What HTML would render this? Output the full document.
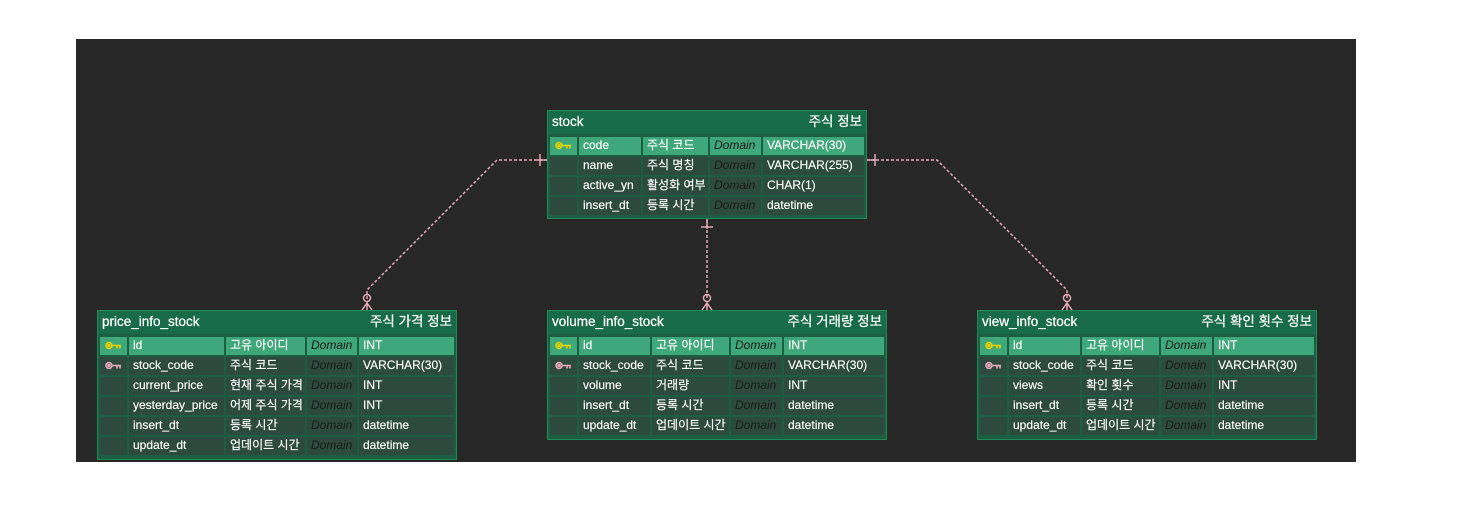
<!DOCTYPE html>
<html><head><meta charset="utf-8"><style>
body{margin:0;width:1470px;height:522px;background:#fff;position:relative;overflow:hidden;font-family:"Liberation Sans","Noto Sans CJK KR",sans-serif}
.canvas{position:absolute;left:76px;top:39px;width:1280px;height:423px;background:#272727}
.t{position:absolute;background:#1c5e41;border:1px solid #1f8a56;box-sizing:border-box}
.hd{position:absolute;left:0;right:0;top:0;height:23px;background:#186b48;color:#fff;font-size:13.5px;line-height:21px;-webkit-text-stroke:0.25px #fff}
.hd .n{position:absolute;left:4px}
.hd .c{position:absolute;right:4px}
.c0{position:absolute;height:18px;background:#2d4a3e;color:#fff;font-size:12px;line-height:17px;padding-left:4px;box-sizing:border-box;white-space:nowrap;overflow:hidden;-webkit-text-stroke:0.15px #fff}
.pk .c0{background:#3fa87a}
.d{font-style:italic;color:#1a1a1a;-webkit-text-stroke:0}
.r{position:absolute;left:0;right:0;height:18px}
.key{position:absolute;left:5px;top:4px}
</style></head><body>
<div class="canvas"></div>
<svg width="1470" height="522" style="position:absolute;left:0;top:0" fill="none" stroke="#e6a9b8" stroke-width="1.5">
<path d="M547 160H497L367 290V300" stroke-dasharray="3 2"/>
<path d="M866 160H937L1067 290V300" stroke-dasharray="3 2"/>
<path d="M707 220V300" stroke-dasharray="3 2"/>
<path d="M540 154v12M875 154v12M701 227h12M707 219v10M547 160h-10M866 160h10"/>
<circle cx="367" cy="298" r="3.5"/><circle cx="707" cy="298" r="3.5"/><circle cx="1067" cy="298" r="3.5"/>
<path d="M367 302v8M362 310l5-7 5 7M707 302v8M702 310l5-7 5 7M1067 302v8M1062 310l5-7 5 7"/>
</svg>

<!-- stock -->
<div class="t" style="left:547px;top:110px;width:320px;height:109px">
<div class="hd"><span class="n">stock</span><span class="c">주식 정보</span></div>
<div class="r pk" style="top:26px"><div class="c0" style="left:2px;width:27px"><svg class="key" width="17" height="9" viewBox="0 0 17 9" fill="none" stroke="#e4d100" stroke-width="1.6"><circle cx="4" cy="4.5" r="3"/><circle cx="4" cy="4.5" r="1"/><path d="M7 4.5h9M12 4.5v3M15 4.5v3"/></svg></div><div class="c0" style="left:31px;width:62px">code</div><div class="c0" style="left:95px;width:65px">주식 코드</div><div class="c0 d" style="left:162px;width:51px">Domain</div><div class="c0" style="left:215px;width:101px">VARCHAR(30)</div></div>
<div class="r" style="top:46px"><div class="c0" style="left:2px;width:27px"></div><div class="c0" style="left:31px;width:62px">name</div><div class="c0" style="left:95px;width:65px">주식 명칭</div><div class="c0 d" style="left:162px;width:51px">Domain</div><div class="c0" style="left:215px;width:101px">VARCHAR(255)</div></div>
<div class="r" style="top:66px"><div class="c0" style="left:2px;width:27px"></div><div class="c0" style="left:31px;width:62px">active_yn</div><div class="c0" style="left:95px;width:65px">활성화 여부</div><div class="c0 d" style="left:162px;width:51px">Domain</div><div class="c0" style="left:215px;width:101px">CHAR(1)</div></div>
<div class="r" style="top:86px"><div class="c0" style="left:2px;width:27px"></div><div class="c0" style="left:31px;width:62px">insert_dt</div><div class="c0" style="left:95px;width:65px">등록 시간</div><div class="c0 d" style="left:162px;width:51px">Domain</div><div class="c0" style="left:215px;width:101px">datetime</div></div>
</div>

<!-- price -->
<div class="t" style="left:97px;top:310px;width:360px;height:150px">
<div class="hd"><span class="n">price_info_stock</span><span class="c">주식 가격 정보</span></div>
<div class="r pk" style="top:26px"><div class="c0" style="left:2px;width:27px"><svg class="key" width="17" height="9" viewBox="0 0 17 9" fill="none" stroke="#e4d100" stroke-width="1.6"><circle cx="4" cy="4.5" r="3"/><circle cx="4" cy="4.5" r="1"/><path d="M7 4.5h9M12 4.5v3M15 4.5v3"/></svg></div><div class="c0" style="left:31px;width:95px">id</div><div class="c0" style="left:128px;width:79px">고유 아이디</div><div class="c0 d" style="left:209px;width:50px">Domain</div><div class="c0" style="left:261px;width:95px">INT</div></div>
<div class="r" style="top:46px"><div class="c0" style="left:2px;width:27px"><svg class="key" width="17" height="9" viewBox="0 0 17 9" fill="none" stroke="#e6a9b8" stroke-width="1.6"><circle cx="4" cy="4.5" r="3"/><circle cx="4" cy="4.5" r="1"/><path d="M7 4.5h9M12 4.5v3M15 4.5v3"/></svg></div><div class="c0" style="left:31px;width:95px">stock_code</div><div class="c0" style="left:128px;width:79px">주식 코드</div><div class="c0 d" style="left:209px;width:50px">Domain</div><div class="c0" style="left:261px;width:95px">VARCHAR(30)</div></div>
<div class="r" style="top:66px"><div class="c0" style="left:2px;width:27px"></div><div class="c0" style="left:31px;width:95px">current_price</div><div class="c0" style="left:128px;width:79px">현재 주식 가격</div><div class="c0 d" style="left:209px;width:50px">Domain</div><div class="c0" style="left:261px;width:95px">INT</div></div>
<div class="r" style="top:86px"><div class="c0" style="left:2px;width:27px"></div><div class="c0" style="left:31px;width:95px">yesterday_price</div><div class="c0" style="left:128px;width:79px">어제 주식 가격</div><div class="c0 d" style="left:209px;width:50px">Domain</div><div class="c0" style="left:261px;width:95px">INT</div></div>
<div class="r" style="top:106px"><div class="c0" style="left:2px;width:27px"></div><div class="c0" style="left:31px;width:95px">insert_dt</div><div class="c0" style="left:128px;width:79px">등록 시간</div><div class="c0 d" style="left:209px;width:50px">Domain</div><div class="c0" style="left:261px;width:95px">datetime</div></div>
<div class="r" style="top:126px"><div class="c0" style="left:2px;width:27px"></div><div class="c0" style="left:31px;width:95px">update_dt</div><div class="c0" style="left:128px;width:79px">업데이트 시간</div><div class="c0 d" style="left:209px;width:50px">Domain</div><div class="c0" style="left:261px;width:95px">datetime</div></div>
</div>

<!-- volume -->
<div class="t" style="left:547px;top:310px;width:340px;height:130px">
<div class="hd"><span class="n">volume_info_stock</span><span class="c">주식 거래량 정보</span></div>
<div class="r pk" style="top:26px"><div class="c0" style="left:2px;width:27px"><svg class="key" width="17" height="9" viewBox="0 0 17 9" fill="none" stroke="#e4d100" stroke-width="1.6"><circle cx="4" cy="4.5" r="3"/><circle cx="4" cy="4.5" r="1"/><path d="M7 4.5h9M12 4.5v3M15 4.5v3"/></svg></div><div class="c0" style="left:31px;width:71px">id</div><div class="c0" style="left:104px;width:77px">고유 아이디</div><div class="c0 d" style="left:183px;width:51px">Domain</div><div class="c0" style="left:236px;width:100px">INT</div></div>
<div class="r" style="top:46px"><div class="c0" style="left:2px;width:27px"><svg class="key" width="17" height="9" viewBox="0 0 17 9" fill="none" stroke="#e6a9b8" stroke-width="1.6"><circle cx="4" cy="4.5" r="3"/><circle cx="4" cy="4.5" r="1"/><path d="M7 4.5h9M12 4.5v3M15 4.5v3"/></svg></div><div class="c0" style="left:31px;width:71px">stock_code</div><div class="c0" style="left:104px;width:77px">주식 코드</div><div class="c0 d" style="left:183px;width:51px">Domain</div><div class="c0" style="left:236px;width:100px">VARCHAR(30)</div></div>
<div class="r" style="top:66px"><div class="c0" style="left:2px;width:27px"></div><div class="c0" style="left:31px;width:71px">volume</div><div class="c0" style="left:104px;width:77px">거래량</div><div class="c0 d" style="left:183px;width:51px">Domain</div><div class="c0" style="left:236px;width:100px">INT</div></div>
<div class="r" style="top:86px"><div class="c0" style="left:2px;width:27px"></div><div class="c0" style="left:31px;width:71px">insert_dt</div><div class="c0" style="left:104px;width:77px">등록 시간</div><div class="c0 d" style="left:183px;width:51px">Domain</div><div class="c0" style="left:236px;width:100px">datetime</div></div>
<div class="r" style="top:106px"><div class="c0" style="left:2px;width:27px"></div><div class="c0" style="left:31px;width:71px">update_dt</div><div class="c0" style="left:104px;width:77px">업데이트 시간</div><div class="c0 d" style="left:183px;width:51px">Domain</div><div class="c0" style="left:236px;width:100px">datetime</div></div>
</div>

<!-- view -->
<div class="t" style="left:977px;top:310px;width:340px;height:130px">
<div class="hd"><span class="n">view_info_stock</span><span class="c">주식 확인 횟수 정보</span></div>
<div class="r pk" style="top:26px"><div class="c0" style="left:2px;width:27px"><svg class="key" width="17" height="9" viewBox="0 0 17 9" fill="none" stroke="#e4d100" stroke-width="1.6"><circle cx="4" cy="4.5" r="3"/><circle cx="4" cy="4.5" r="1"/><path d="M7 4.5h9M12 4.5v3M15 4.5v3"/></svg></div><div class="c0" style="left:31px;width:71px">id</div><div class="c0" style="left:104px;width:77px">고유 아이디</div><div class="c0 d" style="left:183px;width:51px">Domain</div><div class="c0" style="left:236px;width:100px">INT</div></div>
<div class="r" style="top:46px"><div class="c0" style="left:2px;width:27px"><svg class="key" width="17" height="9" viewBox="0 0 17 9" fill="none" stroke="#e6a9b8" stroke-width="1.6"><circle cx="4" cy="4.5" r="3"/><circle cx="4" cy="4.5" r="1"/><path d="M7 4.5h9M12 4.5v3M15 4.5v3"/></svg></div><div class="c0" style="left:31px;width:71px">stock_code</div><div class="c0" style="left:104px;width:77px">주식 코드</div><div class="c0 d" style="left:183px;width:51px">Domain</div><div class="c0" style="left:236px;width:100px">VARCHAR(30)</div></div>
<div class="r" style="top:66px"><div class="c0" style="left:2px;width:27px"></div><div class="c0" style="left:31px;width:71px">views</div><div class="c0" style="left:104px;width:77px">확인 횟수</div><div class="c0 d" style="left:183px;width:51px">Domain</div><div class="c0" style="left:236px;width:100px">INT</div></div>
<div class="r" style="top:86px"><div class="c0" style="left:2px;width:27px"></div><div class="c0" style="left:31px;width:71px">insert_dt</div><div class="c0" style="left:104px;width:77px">등록 시간</div><div class="c0 d" style="left:183px;width:51px">Domain</div><div class="c0" style="left:236px;width:100px">datetime</div></div>
<div class="r" style="top:106px"><div class="c0" style="left:2px;width:27px"></div><div class="c0" style="left:31px;width:71px">update_dt</div><div class="c0" style="left:104px;width:77px">업데이트 시간</div><div class="c0 d" style="left:183px;width:51px">Domain</div><div class="c0" style="left:236px;width:100px">datetime</div></div>
</div>
</body></html>
